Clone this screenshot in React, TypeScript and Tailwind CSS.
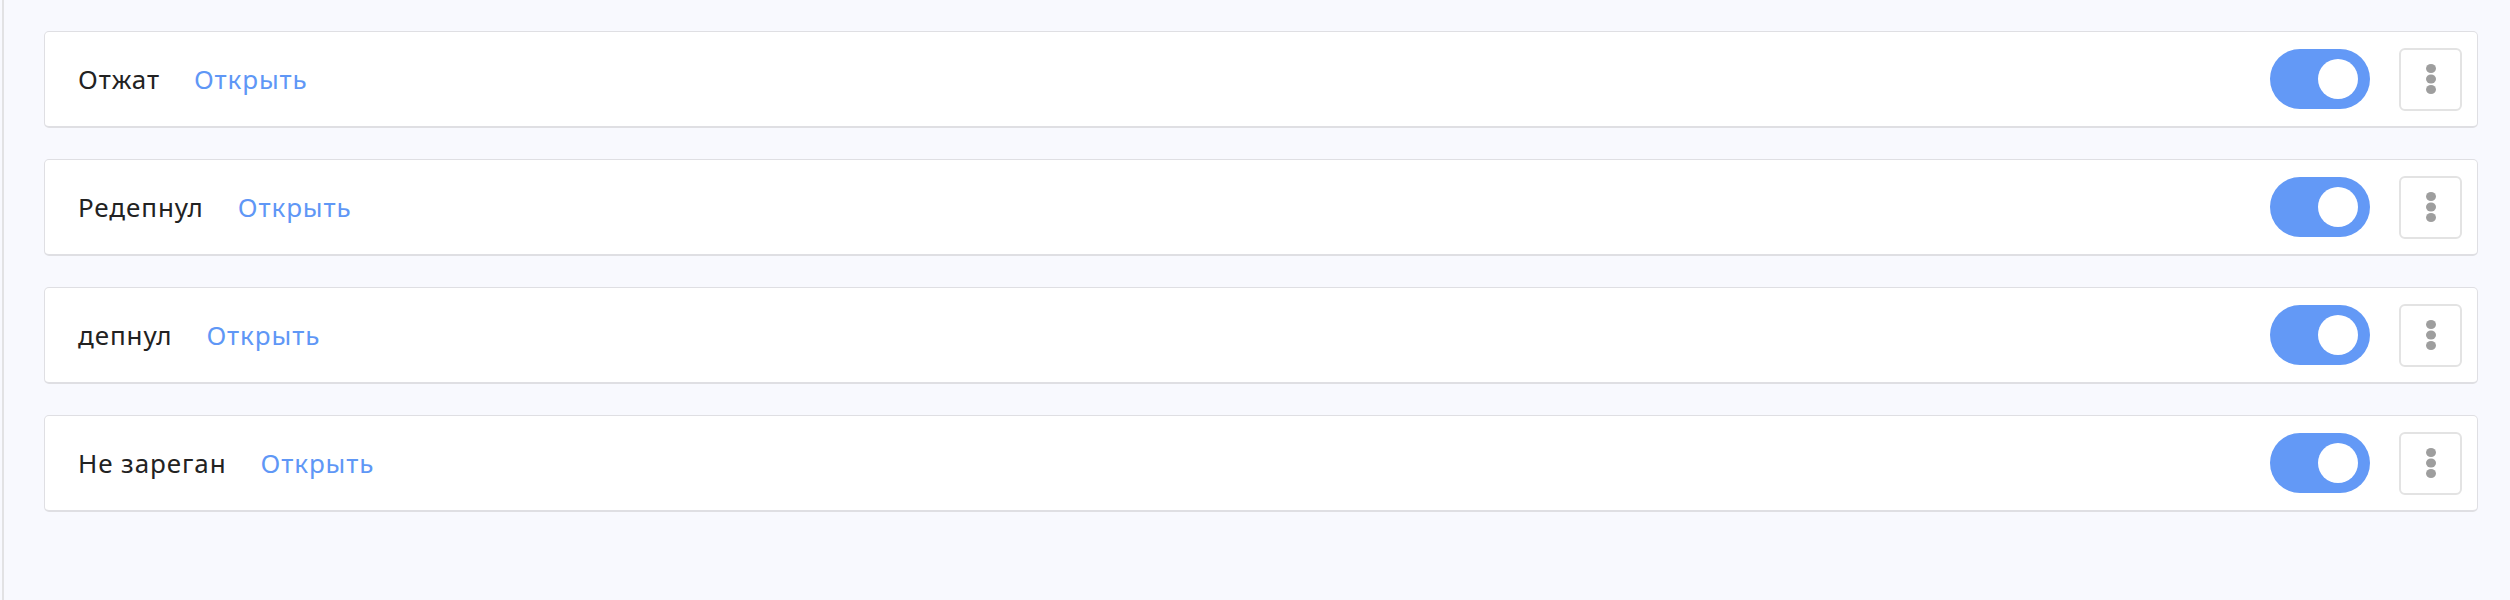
import React from "react";

const rows = ["Отжат", "Редепнул", "депнул", "Не зареган"];

function Toggle() {
  return (
    <div className="relative h-[60px] w-[100px] rounded-full bg-[#6399f6]">
      <div className="absolute right-[12px] top-[10px] h-[40px] w-[40px] rounded-full bg-white" />
    </div>
  );
}

function MenuButton() {
  return (
    <div className="flex h-[63px] w-[63px] items-center justify-center rounded-[6px] border-2 border-[#e3e3e3] bg-white">
      <svg width="12" height="32" viewBox="0 0 12 32">
        <ellipse cx="6" cy="5.5" rx="5" ry="4.6" fill="#9e9e9e" />
        <ellipse cx="6" cy="16" rx="5" ry="4.6" fill="#9e9e9e" />
        <ellipse cx="6" cy="26.5" rx="5" ry="4.6" fill="#9e9e9e" />
      </svg>
    </div>
  );
}

export default function App() {
  return (
    <div
      className="min-h-[600px] w-full bg-[#f8f9fe] pl-[2px]"
      style={{ fontFamily: '"Noto Sans", "Open Sans", sans-serif' }}
    >
      <div className="min-h-[600px] border-l-2 border-[#e2e2e4] pl-[40px] pr-[32px] pt-[31px]">
        <div className="flex flex-col gap-[31px]">
          {rows.map((r) => (
            <div
              key={r}
              className="flex h-[97px] items-center justify-between rounded-[5px] border border-b-2 border-[#dfdfe3] bg-white pl-[33px] pr-[15px]"
            >
              <div className="flex items-center gap-[34px] text-[26px] leading-none tracking-[0.9px]">
                <span className="text-[#222222]">{r}</span>
                <span className="text-[#5f97f6]">Открыть</span>
              </div>
              <div className="flex items-center gap-[29px]">
                <Toggle />
                <MenuButton />
              </div>
            </div>
          ))}
        </div>
      </div>
    </div>
  );
}
